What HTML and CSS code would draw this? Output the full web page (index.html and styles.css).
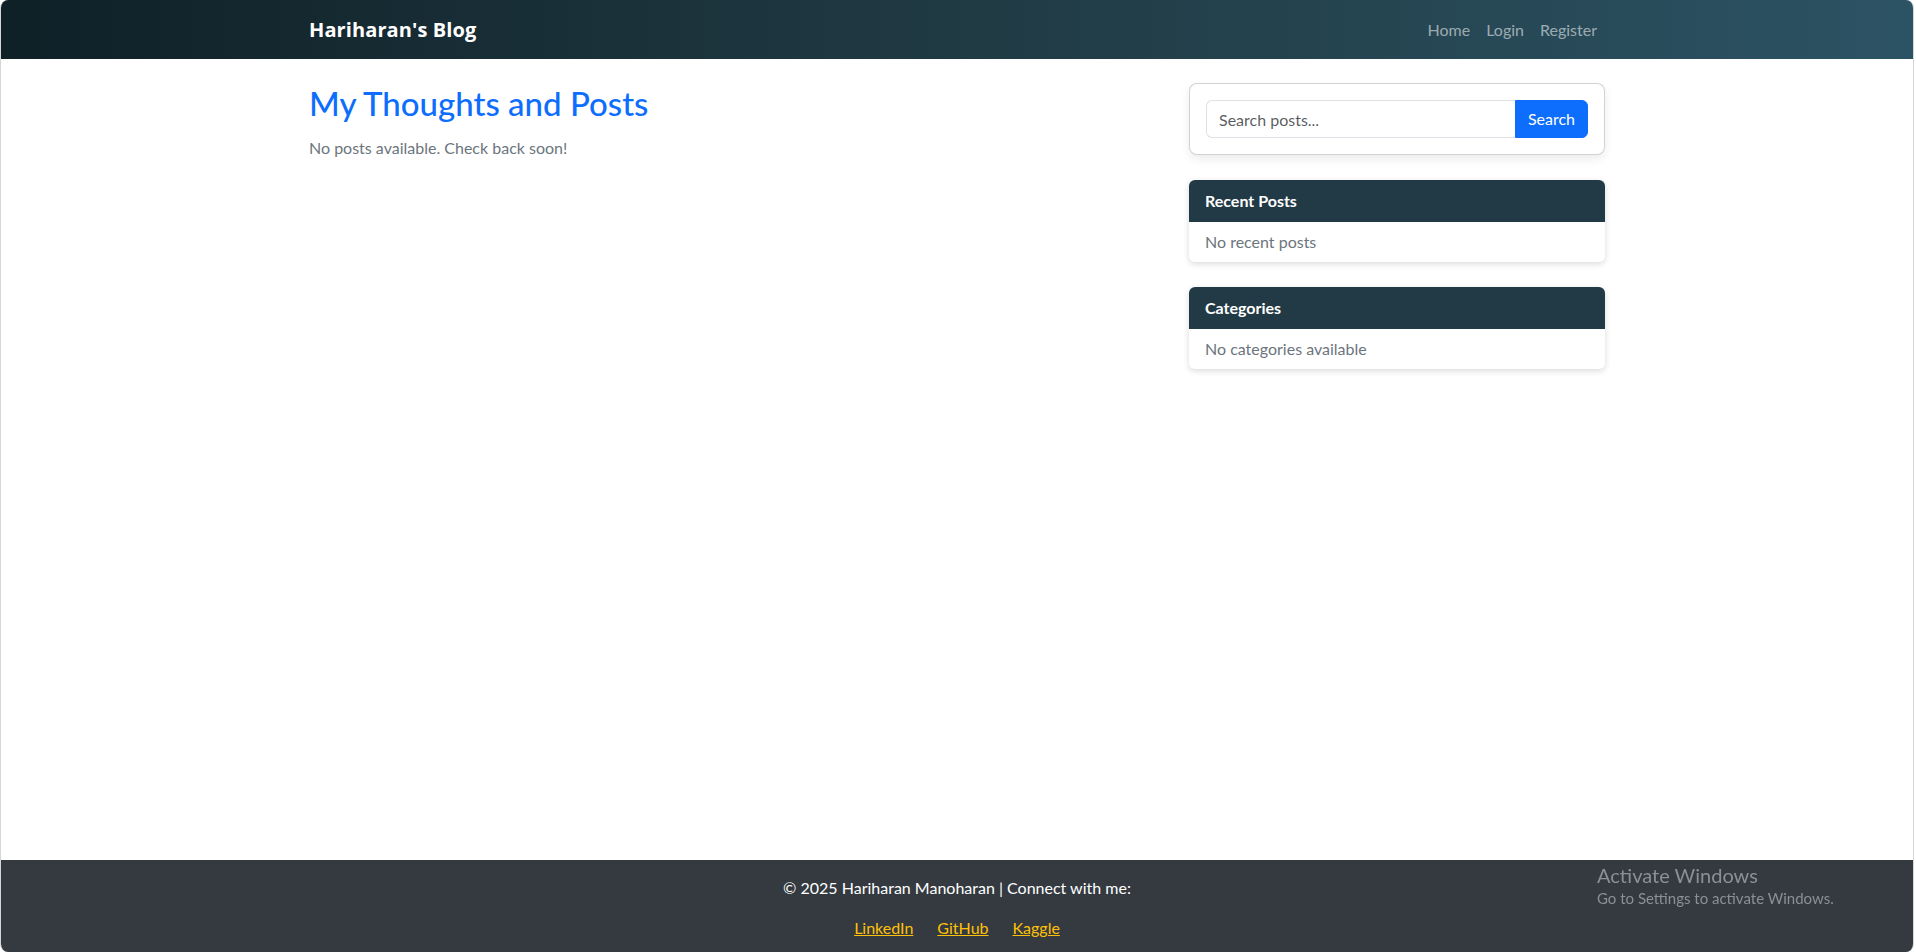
FILE: index.html
```html
<!DOCTYPE html>
<html lang="en">
<head>
<meta charset="utf-8">
<title>Hariharan's Blog</title>
<link rel="stylesheet" href="styles.css">
</head>
<body>
<div class="window">
  <nav class="navbar">
    <div class="container nav-inner">
      <a class="brand" href="#">Hariharan's Blog</a>
      <ul class="nav-links">
        <li><a href="#">Home</a></li>
        <li><a href="#">Login</a></li>
        <li><a href="#">Register</a></li>
      </ul>
    </div>
  </nav>
  <main class="container main">
    <div class="row">
      <section class="col-main">
        <h2 class="page-title">My Thoughts and Posts</h2>
        <p class="muted">No posts available. Check back soon!</p>
      </section>
      <aside class="col-side">
        <div class="card search-card">
          <div class="card-body">
            <form class="input-group">
              <input class="search-input" type="text" placeholder="Search posts...">
              <button class="search-btn" type="button">Search</button>
            </form>
          </div>
        </div>
        <div class="card side-card">
          <div class="card-header">Recent Posts</div>
          <ul class="list"><li class="list-item">No recent posts</li></ul>
        </div>
        <div class="card side-card">
          <div class="card-header">Categories</div>
          <ul class="list"><li class="list-item">No categories available</li></ul>
        </div>
      </aside>
    </div>
  </main>
  <footer class="footer">
    <p class="footer-text">© 2025 Hariharan Manoharan | Connect with me:</p>
    <div class="footer-links">
      <a href="#">LinkedIn</a>
      <a href="#">GitHub</a>
      <a href="#">Kaggle</a>
    </div>
  </footer>
</div>
<div class="activate">
  <div class="activate-title">Activate Windows</div>
  <div class="activate-sub">Go to Settings to activate Windows.</div>
</div>
</body>
</html>
```
FILE: styles.css
```css
* { box-sizing: border-box; }
html, body { margin: 0; padding: 0; background: #fff; }
body {
  font-family: "Lato", "Noto Sans", sans-serif;
  font-size: 16px;
  line-height: 1.5;
  color: #212529;
}
.window {
  width: 1914px;
  height: 952px;
  border-left: 1px solid #d6d6d6;
  border-right: 1px solid #d6d6d6;
  border-radius: 8px;
  overflow: hidden;
  display: flex;
  flex-direction: column;
}
.container {
  width: 100%;
  max-width: 1320px;
  margin: 0 auto;
  padding: 0 12px;
}
.navbar {
  height: 59px;
  background: linear-gradient(to right, #0f2027, #203a43, #2c5364);
  display: flex;
  align-items: center;
}
.nav-inner { display: flex; align-items: center; justify-content: space-between; }
.brand {
  color: #fff;
  font-family: "Open Sans", "Lato", sans-serif;
  font-weight: 700;
  font-size: 20px;
  text-decoration: none;
  line-height: 30px;
  letter-spacing: 0.1px;
  padding-top: 1px;
}
.nav-links { list-style: none; margin: 0; padding: 0; display: flex; }
.nav-links a { display: block; padding: 8px; color: rgba(255,255,255,0.55); text-decoration: none; }
.main { flex: 1; padding-top: 24px; }
.row { display: flex; margin: 0 -12px; }
.col-main { width: 66.6667%; padding: 0 12px; }
.col-side { width: 33.3333%; padding: 0 12px; }
.page-title { margin: 1px 0 12px; font-size: 33px; font-weight: 500; line-height: 1.2; color: #0d6efd; }
.muted { color: #6c757d; margin: 0 0 16px; }
.card {
  background: #fff;
  border: 1px solid rgba(0,0,0,0.175);
  border-radius: 6px;
  margin-bottom: 25px;
  overflow: hidden;
}
.search-card { border-radius: 8px; box-shadow: 0 4px 10px rgba(0,0,0,0.08); }
.card-body { padding: 16px; }
.input-group { display: flex; margin: 0; }
.search-input {
  flex: 1;
  min-width: 0;
  height: 38px;
  padding: 6px 12px;
  font: inherit;
  color: #212529;
  border: 1px solid #dee2e6;
  border-right: none;
  border-radius: 6px 0 0 6px;
  outline: none;
}
.search-input::placeholder { color: rgba(33,37,41,0.75); }
.search-btn {
  height: 38px;
  padding: 6px 12px;
  font: inherit;
  color: #fff;
  background: #0d6efd;
  border: 1px solid #0d6efd;
  border-radius: 0 6px 6px 0;
}
.side-card { border: none; box-shadow: 0 2px 6px rgba(0,0,0,0.15); }
.card-header {
  background: #223a45;
  color: #fff;
  font-weight: 700;
  padding: 9px 16px;
  line-height: 24px;
}
.list { list-style: none; margin: 0; padding: 0; }
.list-item { padding: 8px 16px; color: #6c757d; }
.footer {
  background: #343a40;
  color: #fff;
  text-align: center;
  padding: 16px 0 12px;
}
.footer-text { margin: 0 0 16px; }
.footer-links { display: flex; justify-content: center; gap: 24px; }
.footer-links a { color: #ffc107; }
.activate {
  position: fixed;
  left: 1597px;
  top: 863px;
  color: #8c8f94;
  pointer-events: none;
}
.activate-title { font-size: 20px; line-height: 25px; }
.activate-sub { font-size: 15px; line-height: 20px; }
```
